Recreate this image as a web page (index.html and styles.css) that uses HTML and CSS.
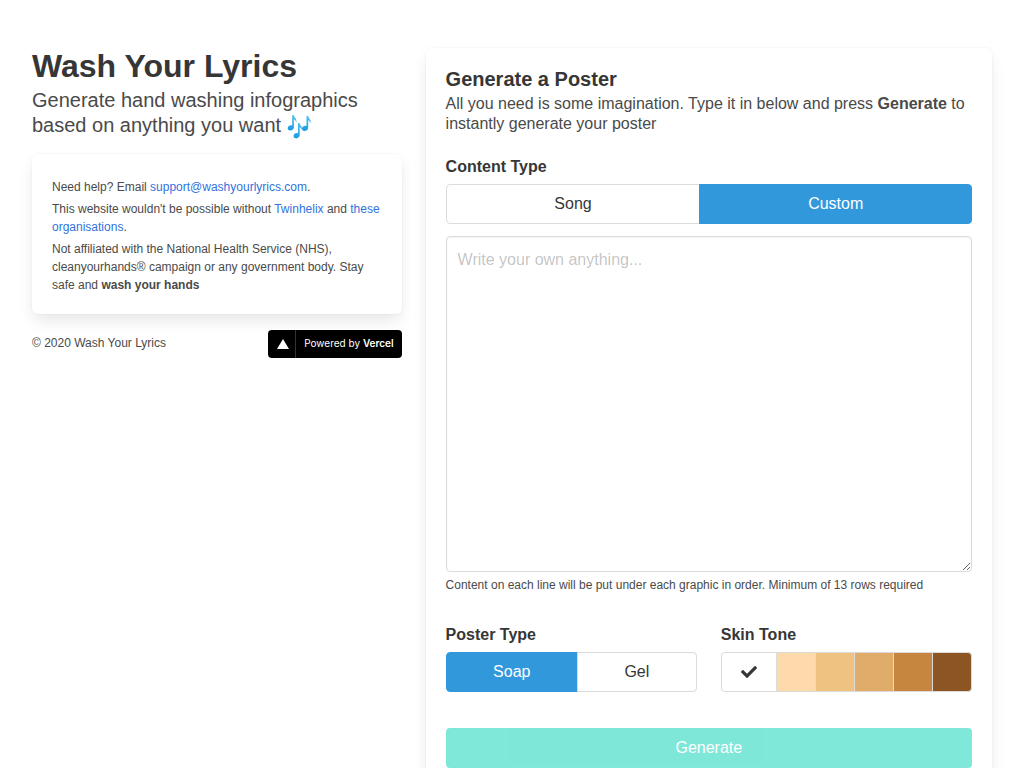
FILE: index.html
```html
<!DOCTYPE html>
<html lang="en">
<head>
<meta charset="utf-8">
<meta name="viewport" content="width=device-width, initial-scale=1">
<title>Wash Your Lyrics</title>
<link rel="stylesheet" href="styles.css">
</head>
<body>
<main class="section">
  <div class="columns">
    <div class="column">
      <h1 class="title">Wash Your Lyrics</h1>
      <p class="subtitle">Generate hand washing infographics based on anything you want
        <svg class="notes-icon" width="24" height="24" viewBox="0 0 24 24" role="img" aria-label="Musical notes">
          <defs><linearGradient id="note" x1="0" y1="0" x2="0" y2="1"><stop offset="0" stop-color="#4fc3f0"/><stop offset="1" stop-color="#1a9ae0"/></linearGradient></defs>
          <g fill="url(#note)">
            <path d="M5.200 0h1.600c.2 2.600 3.400 3.600 2.500 7.400-.3-1.700-1.200-2.700-2.400-3.200v8c0 1.900-1.700 3.300-3.600 3.300-1.500 0-2.600-1-2.600-2.300 0-1.700 1.700-3 3.300-3 .5 0 .9.1 1.200.3z"/>
            <path d="M11 8h1.600c.2 2.600 3.400 3.600 2.500 7.400-.3-1.700-1.200-2.700-2.400-3.200v7.900c0 1.900-1.700 3.300-3.600 3.300-1.500 0-2.600-1-2.600-2.300 0-1.700 1.700-3 3.300-3 .5 0 .9.1 1.200.3z"/>
            <path d="M19.500 1h1.600c.2 2.600 3.400 3.600 2.500 7.400-.3-1.700-1.200-2.700-2.400-3.200v7.500c0 1.900-1.700 3.300-3.600 3.300-1.500 0-2.600-1-2.600-2.300 0-1.700 1.700-3 3.300-3 .5 0 .9.1 1.200.3z"/>
          </g>
        </svg></p>
      <div class="box notes">
        <p>Need help? Email <a href="mailto:support@washyourlyrics.com">support@washyourlyrics.com</a>.</p>
        <p>This website wouldn't be possible without <a href="#">Twinhelix</a> and <a href="#">these organisations</a>.</p>
        <p>Not affiliated with the National Health Service (NHS), cleanyourhands® campaign or any government body. Stay safe and <strong>wash your hands</strong></p>
      </div>
      <footer class="footer">
        <span>© 2020 Wash Your Lyrics</span>
        <a class="badge" href="#">
          <span class="badge-logo"><svg width="12" height="10" viewBox="0 0 12 10" aria-hidden="true"><path d="M6 0l6 10H0z" fill="#fff"/></svg></span>
          <span class="badge-text">Powered by <b>Vercel</b></span>
        </a>
      </footer>
    </div>
    <div class="column">
      <form class="box">
        <h2 class="form-title">Generate a Poster</h2>
        <p class="form-subtitle">All you need is some imagination. Type it in below and press <strong>Generate</strong> to instantly generate your poster</p>
        <div class="field">
          <label class="label" id="content-label" for="content">Content Type</label>
          <div class="buttons" role="group" aria-labelledby="content-label">
            <button class="button" type="button">Song</button>
            <button class="button selected" type="button" aria-pressed="true">Custom</button>
          </div>
          <textarea class="textarea" id="content" rows="13" placeholder="Write your own anything..."></textarea>
          <p class="help">Content on each line will be put under each graphic in order. Minimum of 13 rows required</p>
        </div>
        <div class="options">
          <div class="field">
            <span class="label" id="poster-label">Poster Type</span>
            <div class="buttons" role="group" aria-labelledby="poster-label">
              <button class="button selected" type="button" aria-pressed="true">Soap</button>
              <button class="button" type="button">Gel</button>
            </div>
          </div>
          <div class="field">
            <span class="label" id="tone-label">Skin Tone</span>
            <div class="buttons" role="group" aria-labelledby="tone-label">
              <button class="button" type="button" aria-label="Default" aria-pressed="true"><svg width="16" height="16" viewBox="0 0 512 512" aria-hidden="true"><path fill="currentColor" d="M173.898 439.404l-166.4-166.4c-9.997-9.997-9.997-26.206 0-36.204l36.203-36.204c9.997-9.998 26.207-9.998 36.204 0L192 312.69 432.095 72.596c9.997-9.997 26.207-9.997 36.204 0l36.203 36.204c9.997 9.997 9.997 26.206 0 36.204l-294.4 294.401c-9.998 9.997-26.207 9.997-36.204-.001z"/></svg></button>
              <button class="button tone-light" type="button" aria-label="Light"></button>
              <button class="button tone-medium-light" type="button" aria-label="Medium light"></button>
              <button class="button tone-medium" type="button" aria-label="Medium"></button>
              <button class="button tone-medium-dark" type="button" aria-label="Medium dark"></button>
              <button class="button tone-dark" type="button" aria-label="Dark"></button>
            </div>
          </div>
        </div>
        <button class="generate" type="submit" disabled>Generate</button>
      </form>
    </div>
  </div>
</main>
</body>
</html>
```
FILE: styles.css
```css
*, *::before, *::after { box-sizing: border-box; }
body, h1, h2, p { margin: 0; }
body {
  background: #fff;
  color: #4a4a4a;
  font: 16px/24px "Liberation Sans", Arial, sans-serif;
}
button, textarea { font: inherit; margin: 0; }
a { color: #3273dc; text-decoration: none; }

.section { padding: 48px 20px; }
.columns { display: grid; grid-template-columns: minmax(0, 2fr) minmax(0, 3fr); }
.column { padding: 0 12px; }

.title { color: #363636; font-size: 32px; line-height: 36px; margin-bottom: 4px; }
.subtitle { font-size: 20px; line-height: 25px; margin-bottom: 16px; }
.notes-icon { vertical-align: middle; margin: -4px 0; }

.box {
  background: #fff;
  border-radius: 6px;
  box-shadow: 0 8px 16px -2px rgba(10, 10, 10, .1), 0 0 0 1px rgba(10, 10, 10, .02);
  padding: 20px;
}
.notes { font-size: 12px; line-height: 18px; }
.notes p { padding-top: 4px; }

.footer {
  display: flex;
  justify-content: space-between;
  align-items: center;
  margin-top: 16px;
  font-size: 12px;
  line-height: 18px;
}
.footer > span { padding-bottom: 2px; }
.badge {
  display: flex;
  height: 28px;
  border-radius: 4px;
  background: #000;
  color: #fff;
  font-family: Inter, sans-serif;
  font-size: 10px;
  line-height: 27px;
}
.badge-logo {
  display: flex;
  align-items: center;
  justify-content: center;
  width: 28px;
  padding-left: 2px;
  border-right: 1px solid #333;
}
.badge-text { padding: 0 8px; white-space: nowrap; }
.badge-text b { font-weight: 600; }

.form-title { color: #363636; font-size: 20px; line-height: 22px; margin-bottom: 4px; }
.form-subtitle { line-height: 20px; margin-bottom: 21px; }
.label { display: block; color: #363636; font-weight: 700; margin-bottom: 5px; }

.buttons { display: flex; }
.button {
  display: flex;
  align-items: center;
  justify-content: center;
  flex: 1 0 auto;
  height: 40px;
  padding: 0 16px;
  border: 1px solid #dbdbdb;
  background: #fff;
  color: #363636;
}
.button + .button { margin-left: -1px; }
.button:first-child { border-radius: 4px 0 0 4px; }
.button:last-child { border-radius: 0 4px 4px 0; }
.selected { background: #3298dc; border-color: #3298dc; color: #fff; }
.tone-light { background: #fdd9ab; }
.tone-medium-light { background: #f0c27f; }
.tone-medium { background: #dfac69; }
.tone-medium-dark { background: #c6863f; }
.tone-dark { background: #8d5524; }

.textarea {
  display: block;
  width: 100%;
  margin-top: 12px;
  padding: 11px;
  border: 1px solid #dbdbdb;
  border-radius: 4px;
  box-shadow: inset 0 1px 2px rgba(10, 10, 10, .05);
  background: #fff;
  color: #363636;
  resize: vertical;
}
.textarea::placeholder { color: rgba(54, 54, 54, .3); }
.help { font-size: 12px; line-height: 18px; margin-top: 4px; }

.options {
  display: grid;
  grid-template-columns: repeat(2, minmax(0, 1fr));
  gap: 24px;
  margin: 29px 0 36px;
}
.generate {
  display: block;
  width: 100%;
  height: 40px;
  border: 0;
  border-radius: 4px;
  background: #00d1b2;
  color: #fff;
  opacity: .5;
}
```
